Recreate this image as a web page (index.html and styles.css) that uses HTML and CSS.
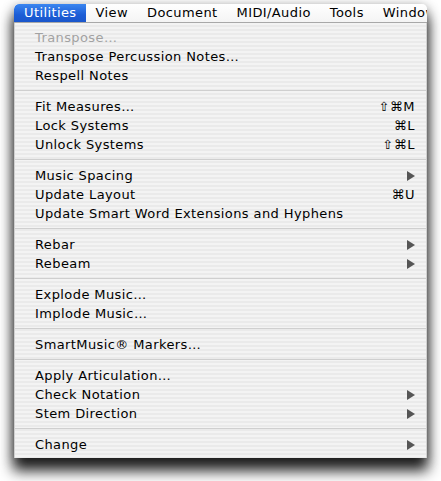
FILE: index.html
```html
<!DOCTYPE html>
<html>
<head>
<meta charset="utf-8">
<link rel="stylesheet" href="styles.css">
</head>
<body>
<div class="stage">
<div class="frame">
  <div class="menubar">
    <span class="mb-item active">Utilities</span>
    <span class="mb-item">View</span>
    <span class="mb-item">Document</span>
    <span class="mb-item">MIDI/Audio</span>
    <span class="mb-item">Tools</span>
    <span class="mb-item">Window</span>
  </div>
  <div class="menu">
    <div class="item disabled"><span class="label">Transpose…</span></div>
    <div class="item"><span class="label">Transpose Percussion Notes…</span></div>
    <div class="item"><span class="label">Respell Notes</span></div>
    <div class="sep"></div>
    <div class="item"><span class="label">Fit Measures…</span><span class="key">⇧⌘M</span></div>
    <div class="item"><span class="label">Lock Systems</span><span class="key">⌘L</span></div>
    <div class="item"><span class="label">Unlock Systems</span><span class="key">⇧⌘L</span></div>
    <div class="sep"></div>
    <div class="item"><span class="label">Music Spacing</span><span class="arrow"></span></div>
    <div class="item"><span class="label">Update Layout</span><span class="key">⌘U</span></div>
    <div class="item"><span class="label">Update Smart Word Extensions and Hyphens</span></div>
    <div class="sep"></div>
    <div class="item"><span class="label">Rebar</span><span class="arrow"></span></div>
    <div class="item"><span class="label">Rebeam</span><span class="arrow"></span></div>
    <div class="sep"></div>
    <div class="item"><span class="label">Explode Music…</span></div>
    <div class="item"><span class="label">Implode Music…</span></div>
    <div class="sep"></div>
    <div class="item"><span class="label">SmartMusic® Markers…</span></div>
    <div class="sep"></div>
    <div class="item"><span class="label">Apply Articulation…</span></div>
    <div class="item"><span class="label">Check Notation</span><span class="arrow"></span></div>
    <div class="item"><span class="label">Stem Direction</span><span class="arrow"></span></div>
    <div class="sep"></div>
    <div class="item"><span class="label">Change</span><span class="arrow"></span></div>
  </div>
</div>
</div>
</body>
</html>
```
FILE: styles.css
```css
html, body {
  margin: 0;
  padding: 0;
  background: #ffffff;
}
body {
  font-family: "DejaVu Sans", "Liberation Sans", sans-serif;
  font-size: 13px;
  letter-spacing: 0.4px;
  color: #000;
  overflow: hidden;
}
.stage {
  width: 441px;
  height: 481px;
  padding: 4px 0 0 14px;
  box-sizing: border-box;
}
.frame {
  width: 413px;
  border-radius: 5px 5px 0 0;
  box-shadow: 0 12px 14px 1px rgba(0,0,0,0.85), 0 2px 12px rgba(0,0,0,0.35);
  background: #f0f0f0;
}
.menubar {
  display: flex;
  height: 18px;
  background: linear-gradient(#ffffff, #f4f4f4);
  border-bottom: 1px solid #a8a8a8;
  border-radius: 5px 5px 0 0;
  overflow: hidden;
  white-space: nowrap;
}
.mb-item {
  padding: 0 9px 0 10px;
  line-height: 18px;
  height: 18px;
  flex: none;
}
.mb-item.active {
  background: linear-gradient(#3b86f0, #1c5dd6 60%, #1a56cb);
  color: #fff;
  border-top-left-radius: 5px;
}
.menu {
  padding: 5px 0 4px;
  background: repeating-linear-gradient(#f3f3f3 0 2px, #eaeaea 2px 4px);
  border-left: 1px solid #d0d0d0;
  border-right: 1px solid #d0d0d0;
}
.item {
  display: flex;
  align-items: center;
  height: 19px;
  padding: 0 11px 0 20px;
}
.item .label {
  flex: 1;
  white-space: nowrap;
}
.item.disabled {
  color: #a2a2a2;
}
.key {
  font-size: 13px;
  letter-spacing: 0.5px;
}
.arrow {
  width: 0;
  height: 0;
  border-top: 5px solid transparent;
  border-bottom: 5px solid transparent;
  border-left: 8px solid #555;
}
.sep {
  height: 1px;
  margin: 5px 0 6px;
  background: #cfcfcf;
}
```
